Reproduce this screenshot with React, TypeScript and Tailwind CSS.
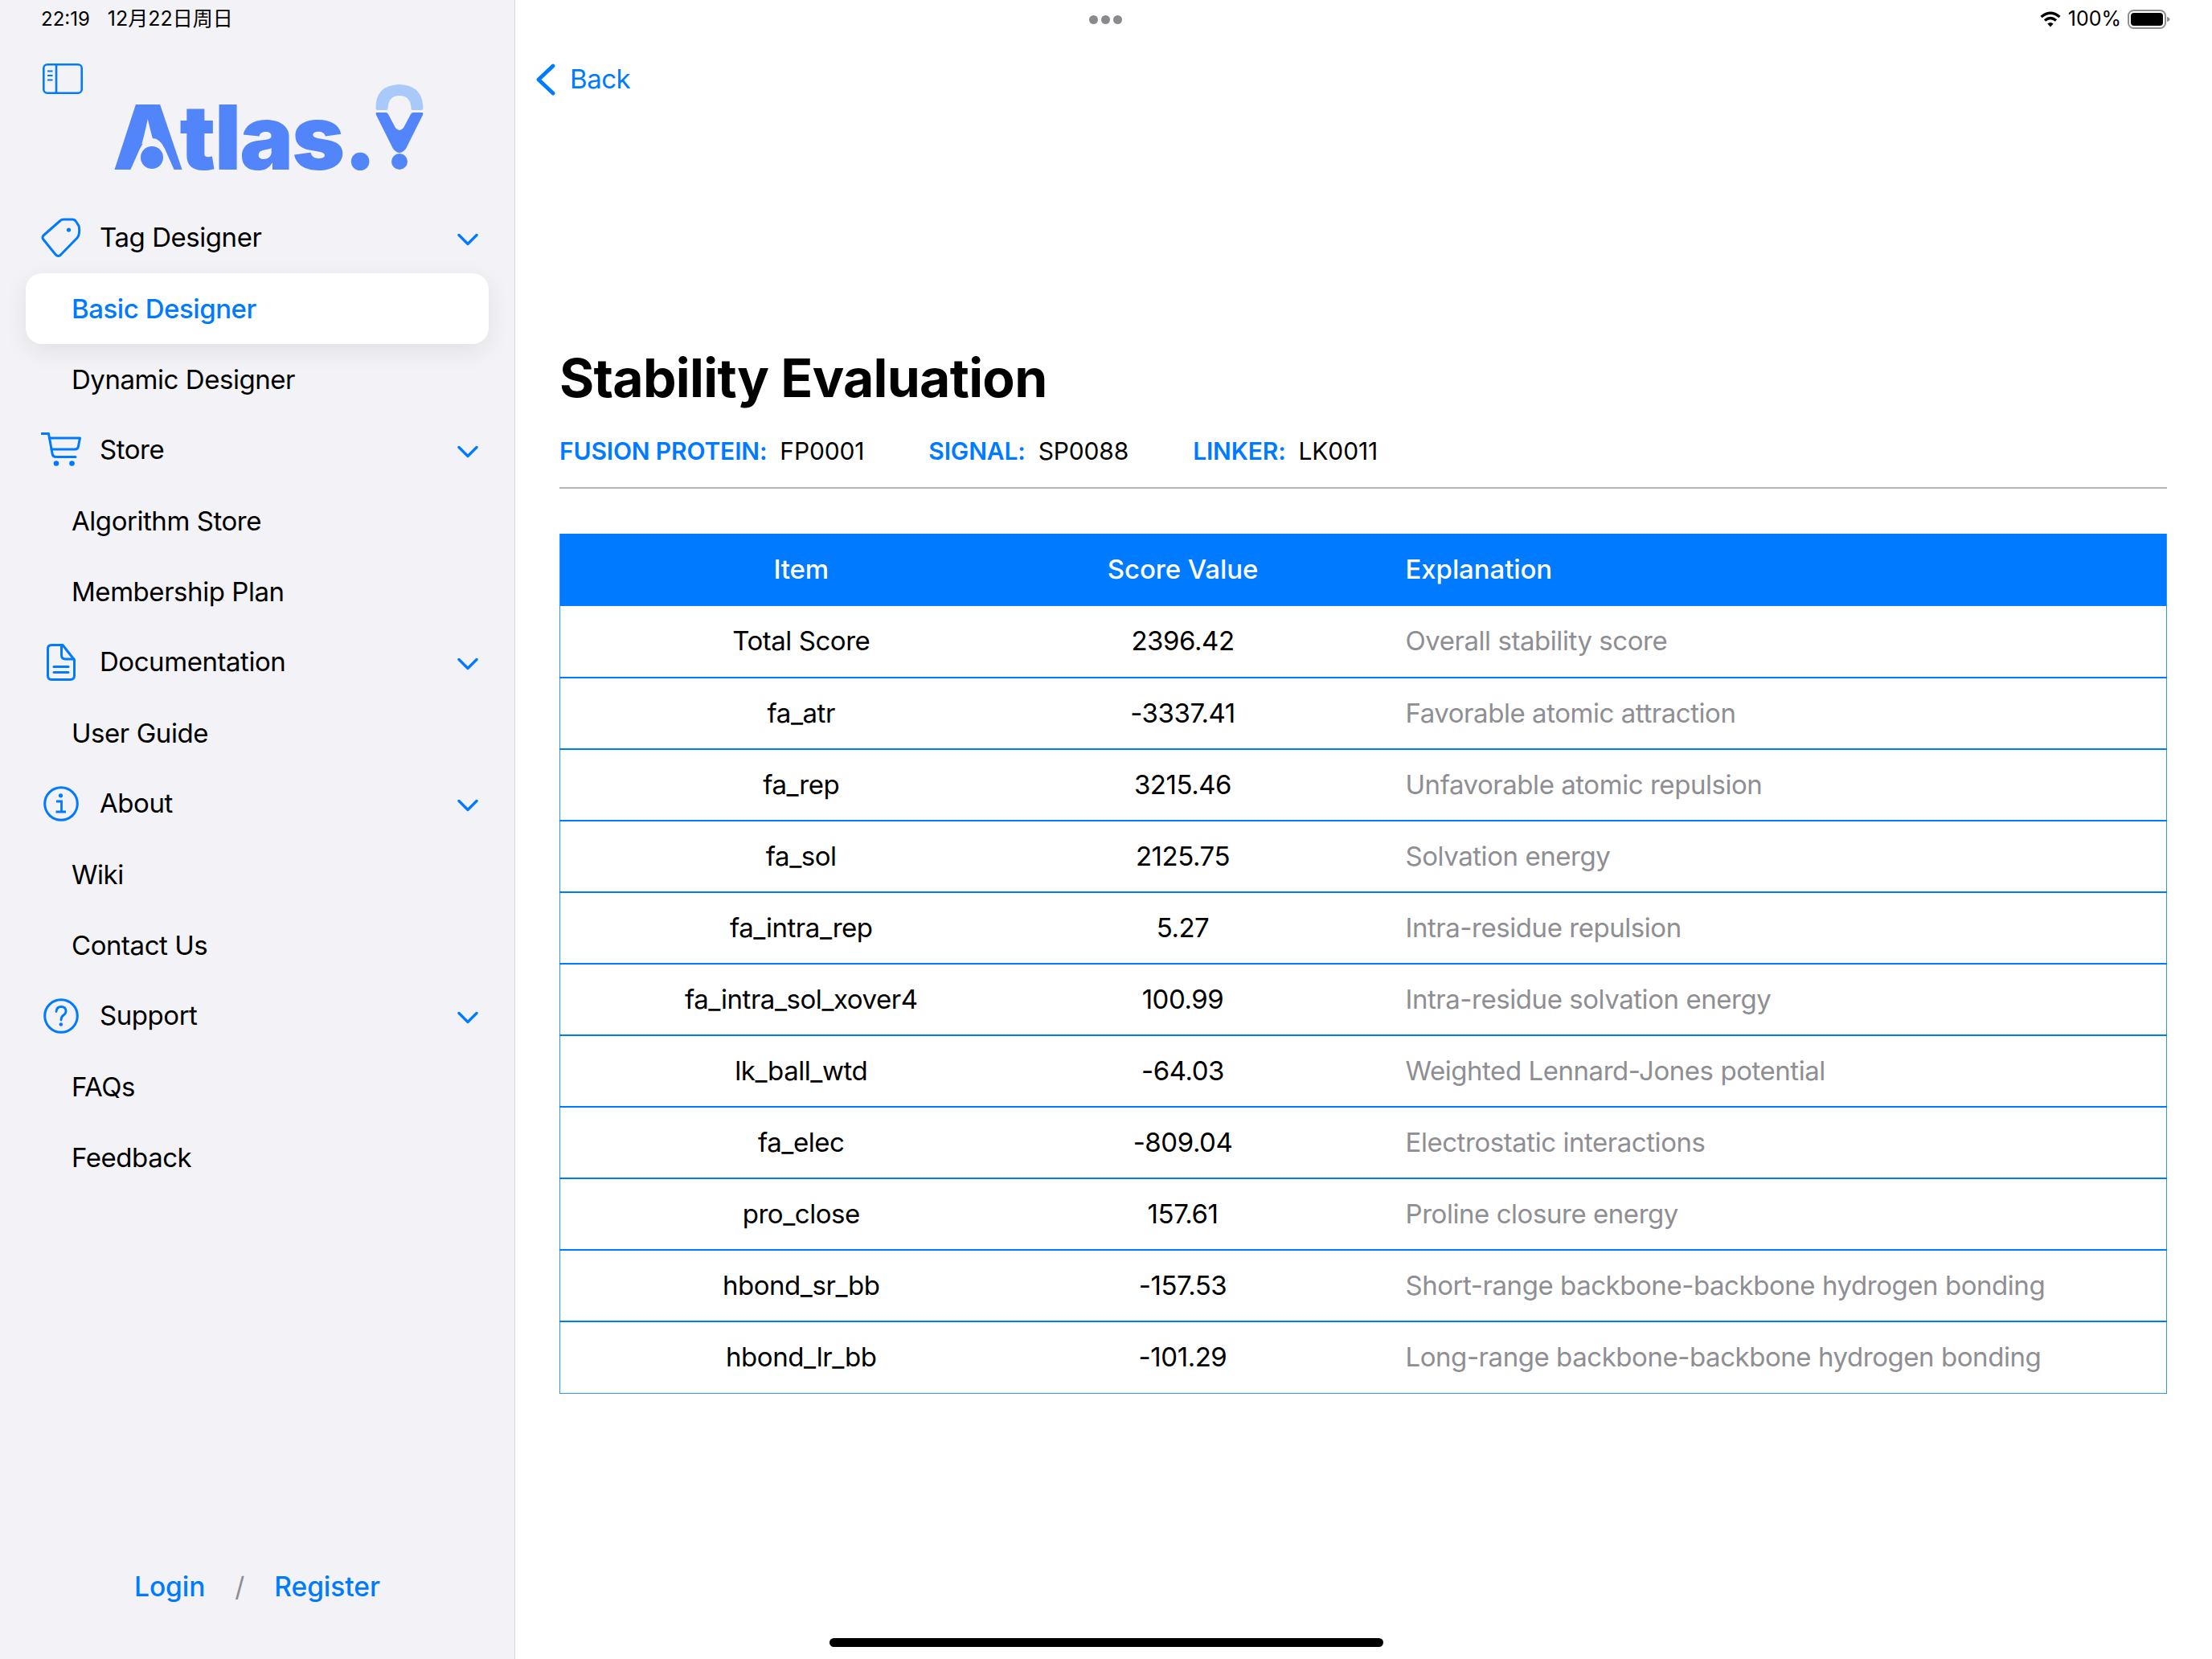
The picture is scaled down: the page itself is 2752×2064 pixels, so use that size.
import React from "react";

const BLUE = "#007aff";

function Chevron() {
  return (
    <svg width="26" height="16" viewBox="0 0 26 16" fill="none" stroke={BLUE} strokeWidth="3.4" strokeLinecap="round" strokeLinejoin="round" className="mt-[3px]">
      <path d="M2 2.5 L13 13.5 L24 2.5" />
    </svg>
  );
}

function TagIcon() {
  return (
    <svg width="50" height="50" viewBox="0 0 50 50" fill="none" stroke={BLUE} strokeWidth="3" strokeLinejoin="round">
      <path d="M24 3.5 Q25.5 2 28 2 H39 Q42 2 43.5 4.5 L47 10 Q48 12 47.5 19 Q47 22.5 45 25 L24 46.5 Q21 49 18 45.5 L3 27 Q1 24.5 3 22 Z" />
      <circle cx="34.5" cy="15" r="2.6" fill={BLUE} stroke="none" />
    </svg>
  );
}

function CartIcon() {
  return (
    <svg width="50" height="44" viewBox="0 0 50 44" fill="none" stroke={BLUE} strokeWidth="3" strokeLinecap="round" strokeLinejoin="round">
      <path d="M1 1.5 H9.5 L14 26 Q14.5 30.5 19 30.5 H43" />
      <path d="M10.5 7 H48.5 L46.5 17 Q46 21 42 21 H13" />
      <circle cx="19" cy="38.5" r="3.3" fill={BLUE} stroke="none" />
      <circle cx="38.5" cy="38.5" r="3.3" fill={BLUE} stroke="none" />
    </svg>
  );
}

function DocIcon() {
  return (
    <svg width="36" height="46" viewBox="0 0 36 46" fill="none" stroke={BLUE} strokeWidth="3" strokeLinecap="round" strokeLinejoin="round">
      <path d="M6 1.5 H20 L34.5 20 V39.5 Q34.5 44.5 29.5 44.5 H6 Q1.5 44.5 1.5 39.5 V6 Q1.5 1.5 6 1.5 Z" />
      <path d="M18.5 2 V14 Q18.5 19 23.5 19 H34" />
      <path d="M9 28.5 H27 M9 35.5 H27" />
    </svg>
  );
}

function InfoIcon() {
  return (
    <svg width="44" height="44" viewBox="0 0 44 44" fill="none" stroke={BLUE} strokeWidth="3">
      <circle cx="22" cy="22" r="20.3" />
      <circle cx="21.5" cy="11.8" r="2.6" fill={BLUE} stroke="none" />
      <path d="M16 19 H22.5 V31.5 M15.5 32 H28" strokeWidth="2.8" />
    </svg>
  );
}

function HelpIcon() {
  return (
    <svg width="44" height="44" viewBox="0 0 44 44" fill="none" stroke={BLUE} strokeWidth="3">
      <circle cx="22" cy="22" r="20.3" />
      <path d="M16 16.5 Q16.5 10.5 22 10.5 Q28 10.5 28 16 Q28 19 25 21 Q22 23 22 27" strokeWidth="2.8" strokeLinecap="round" />
      <circle cx="21.8" cy="32.5" r="2.3" fill={BLUE} stroke="none" />
    </svg>
  );
}

function PanelIcon() {
  return (
    <svg width="50" height="38" viewBox="0 0 50 38" fill="none" stroke={BLUE} strokeWidth="2.6">
      <rect x="1.3" y="1.3" width="47.4" height="35.4" rx="4.5" />
      <path d="M17 1.5 V36.5" />
      <path d="M6 9.5 H12.5 M6 15 H12.5 M6 20.5 H12.5" strokeWidth="2.2" />
    </svg>
  );
}

function PinIcon() {
  return (
    <svg width="60" height="107" viewBox="0 0 60 107" className="shrink-0">
      <path d="M0.5 30 Q0 1 30 0 Q59 1 59.5 30 Q59.5 32 57 32 H46 Q44.5 32 44.5 30 Q44 14 30 14 Q16 14 15.5 30 Q15.5 32 14 32 H3 Q0.5 32 0.5 30 Z" fill="#a9c9fb" />
      <path d="M1.5 35 H13 Q15 35 16 37 L25 54 Q30 60 35 54 L44 37 Q45 35 47 35 H58 Q60 35 59 38 L38 80 Q30 90 22 80 L1 38 Q0 35 1.5 35 Z" fill="#5285f9" />
      <circle cx="30" cy="96" r="10" fill="#5285f9" />
    </svg>
  );
}

function Logo() {
  return (
    <div className="relative flex items-start pl-[143px] -mt-[12px] h-[107px]">
      <div className="relative w-[324px] h-[107px] overflow-visible">
        <span
          className="absolute left-[-3px] top-[-5px] whitespace-nowrap text-[112px] leading-[140px] font-black tracking-[-1.8px] text-[#5285f9]"
          style={{ fontFamily: "Inter, sans-serif" }}
        >
          Atlas.
        </span>
        <svg width="94" height="44" viewBox="0 0 94 44" className="absolute left-0 top-[63px]">
          <path d="M19 44 L31 17 Q37 4 46.5 4 Q56 4 62 17 L74 44 Z" fill="#f2f2f7" />
          <circle cx="46" cy="28" r="14" fill="#5285f9" />
        </svg>
      </div>
      <PinIcon />
    </div>
  );
}

function Head({ icon, label }: { icon: React.ReactNode; label: string }) {
  return (
    <div className="flex items-center h-[88px] pl-[51px] pr-[45px]">
      <div className="w-[50px] flex justify-center items-center shrink-0">{icon}</div>
      <span className="ml-[23px] flex-1 text-[33px] tracking-[-0.45px] text-black">{label}</span>
      <Chevron />
    </div>
  );
}

function Sub({ label, active }: { label: string; active?: boolean }) {
  return (
    <div
      className={
        active
          ? "flex items-center h-[88px] mx-[32px] pl-[57px] pt-[2px] rounded-[20px] bg-white shadow-[0_8px_30px_rgba(0,0,0,0.08)] text-[33px] tracking-[-0.45px] font-medium text-[#007aff]"
          : "flex items-center h-[88px] pl-[89px] pt-[2px] text-[33px] tracking-[-0.45px] text-black"
      }
    >
      {label}
    </div>
  );
}

const rows: [string, string, string][] = [
  ["Total Score", "2396.42", "Overall stability score"],
  ["fa_atr", "-3337.41", "Favorable atomic attraction"],
  ["fa_rep", "3215.46", "Unfavorable atomic repulsion"],
  ["fa_sol", "2125.75", "Solvation energy"],
  ["fa_intra_rep", "5.27", "Intra-residue repulsion"],
  ["fa_intra_sol_xover4", "100.99", "Intra-residue solvation energy"],
  ["lk_ball_wtd", "-64.03", "Weighted Lennard-Jones potential"],
  ["fa_elec", "-809.04", "Electrostatic interactions"],
  ["pro_close", "157.61", "Proline closure energy"],
  ["hbond_sr_bb", "-157.53", "Short-range backbone-backbone hydrogen bonding"],
  ["hbond_lr_bb", "-101.29", "Long-range backbone-backbone hydrogen bonding"],
];

function Meta({ label, value, className }: { label: string; value: string; className?: string }) {
  return (
    <div className={"flex items-baseline " + (className ?? "")}>
      <span className="text-[#007aff] font-semibold text-[30px] tracking-[-0.15px] mr-[16px]">{label}</span>
      <span className="text-[30px] tracking-[-0.15px] text-black">{value}</span>
    </div>
  );
}

export default function App() {
  return (
    <div
      className="relative flex w-[2752px] h-[2064px] overflow-hidden bg-white text-black"
      style={{ fontFamily: "Inter, 'Noto Sans CJK SC', sans-serif" }}
    >
      <aside className="flex flex-col w-[641px] shrink-0 bg-[#f2f2f7] border-r border-[#d8d8dc] pb-[65px]">
        <div className="h-[252px] pt-[79px]">
          <div className="pl-[53px] h-[38px]">
            <PanelIcon />
          </div>
          <Logo />
        </div>
        <nav className="flex flex-col">
          <Head icon={<TagIcon />} label="Tag Designer" />
          <Sub label="Basic Designer" active />
          <Sub label="Dynamic Designer" />
          <Head icon={<CartIcon />} label="Store" />
          <Sub label="Algorithm Store" />
          <Sub label="Membership Plan" />
          <Head icon={<DocIcon />} label="Documentation" />
          <Sub label="User Guide" />
          <Head icon={<InfoIcon />} label="About" />
          <Sub label="Wiki" />
          <Sub label="Contact Us" />
          <Head icon={<HelpIcon />} label="Support" />
          <Sub label="FAQs" />
          <Sub label="Feedback" />
        </nav>
        <div className="mt-auto flex items-center pl-[167px] text-[33.5px] tracking-[-0.05px] font-medium text-[#007aff]">
          <span>Login</span>
          <span className="mx-[37px] font-normal text-[#8e8e93]">/</span>
          <span>Register</span>
        </div>
      </aside>

      <main className="flex-1 flex flex-col pl-[55px] pr-[56px]">
        <div className="flex items-center h-[44px] mt-[77px] ml-[-25px] text-[#007aff]">
          <svg width="26" height="40" viewBox="0 0 26 40" fill="none" stroke={BLUE} strokeWidth="4.8" strokeLinecap="round" strokeLinejoin="round" className="ml-[-5px]">
            <path d="M22 3 L4 20 L22 37" />
          </svg>
          <span className="ml-[17px] text-[33px] tracking-[-0.45px]">Back</span>
        </div>
        <h1 className="mt-[308px] text-[66px] leading-[82px] font-bold tracking-[-0.7px] text-black">Stability Evaluation</h1>
        <div className="flex items-center h-[44px] mt-[28px]">
          <Meta label="FUSION PROTEIN:" value="FP0001" />
          <Meta label="SIGNAL:" value="SP0088" className="ml-[80px]" />
          <Meta label="LINKER:" value="LK0011" className="ml-[80px]" />
        </div>
        <div className="h-[2px] bg-[#b5b5b5] mt-[23px]" />
        <table className="mt-[56px] w-full table-fixed border-collapse border-x border-b border-[#2f94ff] text-[33px] tracking-[-0.45px]">
          <colgroup>
            <col className="w-[600px]" />
            <col className="w-[350px]" />
            <col />
          </colgroup>
          <thead>
            <tr className="h-[90px] bg-[#007aff] text-white">
              <th className="font-medium tracking-[-0.1px] text-center">Item</th>
              <th className="font-medium tracking-[-0.1px] text-center">Score Value</th>
              <th className="font-medium tracking-[-0.1px] text-left pl-[102px]">Explanation</th>
            </tr>
          </thead>
          <tbody>
            {rows.map(([a, b, c], i) => (
              <tr key={a} className={i === rows.length - 1 ? "h-[89px]" : "h-[89px] border-b-2 border-[#007aff]"}>
                <td className="text-center text-black">{a}</td>
                <td className="text-center text-black">{b}</td>
                <td className="pl-[102px] text-[#8e8e93]">{c}</td>
              </tr>
            ))}
          </tbody>
        </table>
      </main>

      {/* iPadOS status bar */}
      <div className="absolute left-[51px] top-[9px] flex items-center h-[30px] text-[24px] text-black">
        <span>22:19</span>
        <span className="ml-[22px] text-[25px]">12月22日周日</span>
      </div>
      <div className="absolute left-[1355px] top-[19px] flex gap-[4px]">
        <span className="w-[11px] h-[11px] rounded-full bg-[#8a8a8e]" />
        <span className="w-[11px] h-[11px] rounded-full bg-[#8a8a8e]" />
        <span className="w-[11px] h-[11px] rounded-full bg-[#8a8a8e]" />
      </div>
      <div className="absolute right-[113px] top-[9px] flex items-center h-[30px] text-[25px] text-black">
        <svg width="28" height="20" viewBox="0 0 26 20" fill="none" stroke="#000" strokeWidth="3.2" className="mr-[8px]">
          <path d="M1.5 7 Q13 -2.5 24.5 7" />
          <path d="M6 11.5 Q13 5.5 20 11.5" />
          <path d="M13 19.5 L9.3 15.6 Q13 12.5 16.7 15.6 Z" fill="#000" stroke="none" />
        </svg>
        <span>100%</span>
      </div>
      <svg width="54" height="24" viewBox="0 0 54 24" className="absolute left-[2647px] top-[12px]">
        <rect x="1" y="1" width="46" height="22" rx="6.5" fill="none" stroke="#8e8e93" strokeWidth="2" />
        <rect x="4" y="4" width="40" height="16" rx="4" fill="#000" />
        <path d="M49 9 Q52.5 10 52.5 12 Q52.5 14 49 15 Z" fill="#8e8e93" />
      </svg>

      {/* home indicator */}
      <div className="absolute left-[1032px] top-[2038px] w-[689px] h-[11px] rounded-full bg-black" />
    </div>
  );
}
